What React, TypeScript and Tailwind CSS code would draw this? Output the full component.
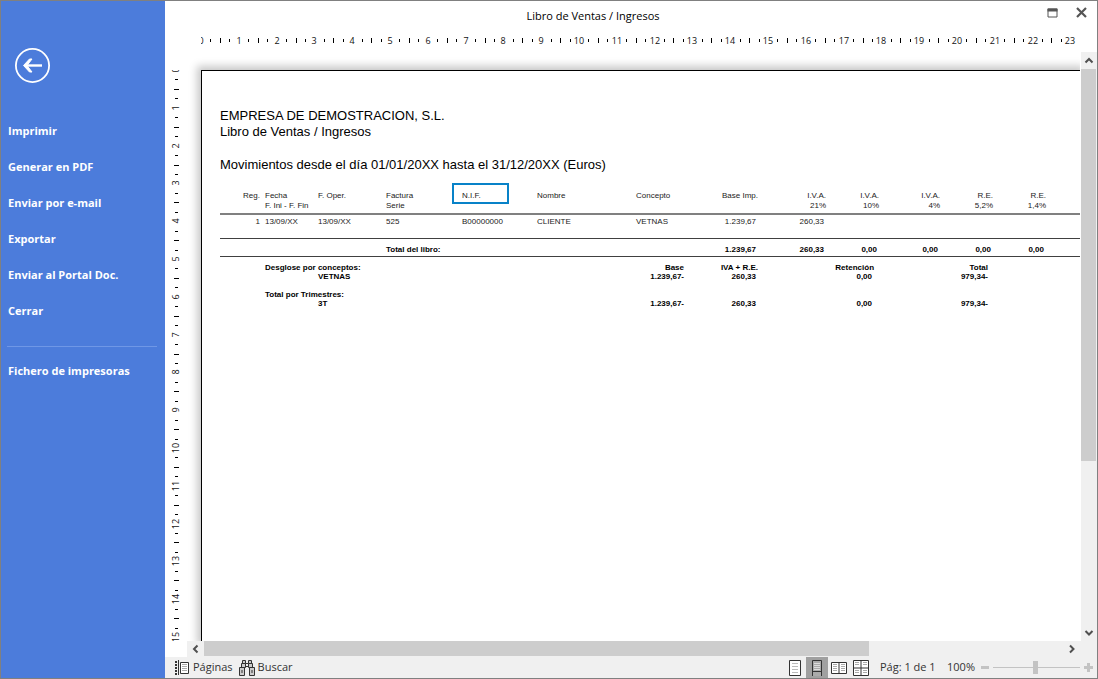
import React, { useState } from 'react';

const CM = 37.8;

const menuItems = ['Imprimir', 'Generar en PDF', 'Enviar por e-mail', 'Exportar', 'Enviar al Portal Doc.', 'Cerrar'];

const taxColumns = [
  { name: 'I.V.A.', rate: '21%', amount: '260,33', total: '260,33' },
  { name: 'I.V.A.', rate: '10%', amount: '', total: '0,00' },
  { name: 'I.V.A.', rate: '4%', amount: '', total: '0,00' },
  { name: 'R.E.', rate: '5,2%', amount: '', total: '0,00' },
  { name: 'R.E.', rate: '1,4%', amount: '', total: '0,00' },
];

// Ruler in centimetres, with a tick every quarter
function Ruler({ vertical = false, length }: { vertical?: boolean; length: number }) {
  const marks = Array.from({ length: length * 4 + 1 }, (_, i) => i);

  return (
    <svg className="block h-full w-full" aria-hidden="true">
      {marks.map((i) => {
        const pos = Math.round((i * CM) / 4);
        if (i % 4 === 0) {
          return (
            <text
              key={i}
              x={vertical ? 0 : pos}
              y={vertical ? 0 : 13}
              transform={vertical ? `translate(14 ${pos}) rotate(-90)` : undefined}
              textAnchor="middle"
              fontSize="9"
              fill="#111"
            >
              {i / 4}
            </text>
          );
        }
        const long = i % 2 === 0;
        const start = long ? 7 : 8;
        const size = long ? 5 : 3;
        return vertical ? (
          <rect key={i} x={start + 2} y={pos} width={size} height="1" fill="#000" />
        ) : (
          <rect key={i} x={pos} y={start} width="1" height={size} fill="#000" />
        );
      })}
    </svg>
  );
}

function Chevron({ direction }: { direction: 'up' | 'down' | 'left' | 'right' }) {
  const paths = {
    up: 'M1.5 6.5 L5 3 L8.5 6.5',
    down: 'M1.5 3 L5 6.5 L8.5 3',
    left: 'M6.5 1.5 L3 5 L6.5 8.5',
    right: 'M3 1.5 L6.5 5 L3 8.5',
  };
  return (
    <svg width="10" height="10" viewBox="0 0 10 10" fill="none" stroke="#505050" strokeWidth="2">
      <path d={paths[direction]} />
    </svg>
  );
}

function Sidebar() {
  return (
    <aside className="flex w-41 shrink-0 flex-col bg-[#4c7cdb] pt-[46px] text-[11px] font-bold text-white">
      <button aria-label="Volver" className="ml-[13px] h-9 w-9">
        <svg width="36" height="36" viewBox="0 0 36 36" fill="none" stroke="#fff">
          <circle cx="18.5" cy="18.5" r="16.6" strokeWidth="1.8" />
          <path d="M28 18.5H11" strokeWidth="2.4" />
          <path d="M18 12h-2.5L9.5 18.5l6 6.5H18l-5-6.5z" fill="#fff" strokeWidth="1" />
        </svg>
      </button>
      <nav className="mt-[30px] flex flex-col">
        {menuItems.map((item) => (
          <button key={item} className="h-9 pl-[7px] text-left">
            {item}
          </button>
        ))}
        <hr className="mt-[17px] mr-2 ml-1.5 border-[#6f97e6]" />
        <button className="mt-1.5 h-9 pl-[7px] text-left">Fichero de impresoras</button>
      </nav>
    </aside>
  );
}

function TitleBar() {
  return (
    <header className="flex h-[30px] shrink-0 items-center">
      <h1 className="flex-1 text-center text-[11px]">Libro de Ventas / Ingresos</h1>
      <div className="flex w-[76px] justify-end gap-4 pr-[9px] pb-2">
        <button aria-label="Maximizar">
          <svg width="13" height="13" viewBox="0 0 13 13">
            <path d="M2 3h9v8H2z" fill="none" stroke="#555" />
            <path d="M1.5 2.5h10v3h-10z" fill="#555" />
          </svg>
        </button>
        <button aria-label="Cerrar ventana">
          <svg width="13" height="13" viewBox="0 0 13 13" stroke="#555" strokeWidth="2.2">
            <path d="M2 2l9 9M11 2l-9 9" />
          </svg>
        </button>
      </div>
    </header>
  );
}

function LedgerTable() {
  return (
    <table className="mt-[17px] w-full table-fixed border-collapse text-left text-[8px] leading-[10px]">
      <colgroup>
        <col className="w-[45px]" />
        <col className="w-[53px]" />
        <col className="w-[68px]" />
        <col className="w-[66px]" />
        <col className="w-[85px]" />
        <col className="w-[99px]" />
        <col className="w-[50px]" />
        <col className="w-[72px]" />
        <col className="w-[68px]" />
        <col className="w-[53px]" />
        <col className="w-[61px]" />
        <col className="w-[53px]" />
        <col className="w-[53px]" />
        <col />
      </colgroup>
      <thead>
        <tr className="h-[24px] border-b-2 border-[#808080] align-top whitespace-nowrap text-[#222] [&>th]:pt-px [&>th]:font-normal">
          <th className="pr-[5px] text-right">Reg.</th>
          <th>Fecha<br />F. Ini - F. Fin</th>
          <th>F. Oper.</th>
          <th>Factura<br />Serie</th>
          <th className="relative pl-2.5">
            N.I.F.
            <span className="absolute -top-[7px] left-0 h-[21px] w-[57px] border-2 border-[#0882c8]" />
          </th>
          <th>Nombre</th>
          <th>Concepto</th>
          <th className="text-right">Base Imp.</th>
          {taxColumns.map((tax, i) => (
            <th key={i} className="text-right">{tax.name}<br />{tax.rate}</th>
          ))}
          <th />
        </tr>
      </thead>
      <tbody className="text-[#222]">
        <tr className="h-[24px] border-b border-[#404040] align-top [&>td]:pt-0.5">
          <td className="pr-[5px] text-right">1</td>
          <td>13/09/XX</td>
          <td>13/09/XX</td>
          <td>525</td>
          <td className="pl-2.5">B00000000</td>
          <td>CLIENTE</td>
          <td>VETNAS</td>
          <td className="pr-0.5 text-right">1.239,67</td>
          {taxColumns.map((tax, i) => (
            <td key={i} className="pr-0.5 text-right">{tax.amount}</td>
          ))}
          <td />
        </tr>
      </tbody>
      <tfoot className="font-bold text-black">
        <tr className="h-[18px] border-b border-[#404040] align-top [&>td]:pt-1.5">
          <td colSpan={3} />
          <td colSpan={4}>Total del libro:</td>
          <td className="pr-0.5 text-right">1.239,67</td>
          {taxColumns.map((tax, i) => (
            <td key={i} className="pr-0.5 text-right">{tax.total}</td>
          ))}
          <td />
        </tr>
      </tfoot>
    </table>
  );
}

function SummaryTable() {
  return (
    <table className="mt-1.5 w-full table-fixed text-right text-[8px] leading-[9px] font-bold">
      <colgroup>
        <col className="w-[45px]" />
        <col className="w-[53px]" />
        <col className="w-[266px]" />
        <col className="w-[100px]" />
        <col className="w-[74px]" />
        <col className="w-[116px]" />
        <col className="w-[114px]" />
        <col />
      </colgroup>
      <thead>
        <tr>
          <th />
          <th colSpan={2} className="text-left">Desglose por conceptos:</th>
          <th>Base</th>
          <th>IVA + R.E.</th>
          <th>Retención</th>
          <th>Total</th>
          <th />
        </tr>
      </thead>
      <tbody>
        <tr>
          <td colSpan={2} />
          <td className="text-left">VETNAS</td>
          <td>1.239,67-</td>
          <td className="pr-0.5">260,33</td>
          <td className="pr-0.5">0,00</td>
          <td>979,34-</td>
        </tr>
        <tr>
          <td />
          <th colSpan={2} className="pt-[9px] text-left">Total por Trimestres:</th>
        </tr>
        <tr>
          <td colSpan={2} />
          <td className="text-left">3T</td>
          <td>1.239,67-</td>
          <td className="pr-0.5">260,33</td>
          <td className="pr-0.5">0,00</td>
          <td>979,34-</td>
        </tr>
      </tbody>
    </table>
  );
}

function ReportPage() {
  return (
    <article className="h-full border-t border-l border-black bg-white pt-[37px] pl-[18px] font-['Liberation_Sans',Arial,sans-serif] text-black shadow-[0_0_8px_4px_rgba(0,0,0,0.22)]">
      <div className="text-[13px] leading-4">
        <h2>EMPRESA DE DEMOSTRACION, S.L.</h2>
        <p>Libro de Ventas / Ingresos</p>
        <p className="mt-[17px]">Movimientos desde el día 01/01/20XX hasta el 31/12/20XX (Euros)</p>
      </div>
      <LedgerTable />
      <SummaryTable />
    </article>
  );
}

function PageLines({ x, y, rows, width = 5 }: { x: number; y: number; rows: number; width?: number }) {
  return (
    <g stroke="#aaa">
      {Array.from({ length: rows }, (_, i) => (
        <path key={i} d={`M${x} ${y + i * 2 + 0.5}h${width}`} />
      ))}
    </g>
  );
}

function ViewIcon({ view }: { view: string }) {
  return (
    <svg width="18" height="18" viewBox="0 0 18 18" fill="none" stroke="#333">
      {view === 'Una página' && (
        <>
          <path d="M3.5 1.5h11v15h-11z" fill="#fff" />
          <path d="M6 4.5h6M6 7.5h6M6 10.5h6M6 13.5h6" stroke="#bbb" />
        </>
      )}
      {view === 'Continuo' && (
        <>
          <path d="M4.5 17V1.5h9V17M4.5 12.5h9" fill="#aaa" />
          <path d="M6 4.5h6M6 6.5h6M6 8.5h6M6 10.5h6" stroke="#ddd" />
        </>
      )}
      {view === 'Dos páginas' && (
        <>
          <path d="M1.5 3.5h15v11h-15zM9 3.5v11" fill="#fff" />
          <PageLines x={3} y={5} rows={4} width={4} />
          <PageLines x={11} y={5} rows={4} width={4} />
        </>
      )}
      {view === 'Cuatro páginas' && (
        <>
          <path d="M1.5 1.5h15v15h-15zM9 1.5v15M1 9h16" fill="#fff" />
          <PageLines x={3} y={3} rows={2} width={4} />
          <PageLines x={11} y={3} rows={2} width={4} />
          <PageLines x={3} y={11} rows={2} width={4} />
          <PageLines x={11} y={11} rows={2} width={4} />
        </>
      )}
    </svg>
  );
}

function StatusBar() {
  const [view, setView] = useState('Continuo');
  const [zoom, setZoom] = useState(100);
  const views = ['Una página', 'Continuo', 'Dos páginas', 'Cuatro páginas'];

  return (
    <footer className="flex h-[21px] shrink-0 items-center bg-[#f0f0f0] text-[11px] text-[#333]">
      <button className="ml-2.5 flex items-center gap-1">
        <svg width="14" height="15" viewBox="0 0 14 15" fill="none" stroke="#333">
          <path d="M1 1v14" strokeWidth="2" strokeDasharray="2 1" />
          <path d="M3.5 0v15" />
          <path d="M5.5 2.5h8v11h-8z" fill="#fff" />
          <path d="M7 4.5h5M7 6.5h5M7 8.5h5M7 10.5h5" stroke="#aaa" />
        </svg>
        Páginas
      </button>
      <button className="ml-1.5 flex items-center gap-[3px]">
        <svg width="16" height="16" viewBox="0 0 16 16" fill="#ccc" stroke="#333">
          <path d="M3.5 0.5h3v3h-3zM9.5 0.5h3v3h-3z" />
          <path d="M6.5 3.5h3v3h-3z" fill="#f0f0f0" />
          <path d="M2.5 3.5h4v4h-4zM9.5 3.5h4v4h-4z" />
          <path d="M0.5 7.5h5v8h-5zM10.5 7.5h5v8h-5z" />
          <path d="M3 10v3M13 10v3" />
        </svg>
        Buscar
      </button>
      <div className="ml-auto flex self-stretch">
        {views.map((v) => (
          <button
            key={v}
            aria-label={v}
            onClick={() => setView(v)}
            className={`flex w-[22px] items-center justify-center ${view === v ? 'bg-[#a0a0a0]' : ''}`}
          >
            <ViewIcon view={v} />
          </button>
        ))}
      </div>
      <span className="ml-2 w-[57px] whitespace-nowrap">Pág: 1 de 1</span>
      <span className="ml-2.5 w-[34px]">{zoom}%</span>
      <button aria-label="Reducir" onClick={() => setZoom(Math.max(0, zoom - 10))}>
        <svg width="8" height="9" viewBox="0 0 8 9"><path d="M0 3h8v3H0z" fill="#c3c3c3" /></svg>
      </button>
      <input
        type="range"
        aria-label="Zoom"
        min={0}
        max={206}
        value={zoom}
        onChange={(e) => setZoom(Number(e.target.value))}
        className="mx-1 h-[13px] w-[87px] appearance-none bg-[linear-gradient(#c3c3c3,#c3c3c3)] bg-[length:100%_1px] bg-center bg-no-repeat [&::-webkit-slider-thumb]:h-[13px] [&::-webkit-slider-thumb]:w-[5px] [&::-webkit-slider-thumb]:appearance-none [&::-webkit-slider-thumb]:bg-[#c3c3c3]"
      />
      <button aria-label="Ampliar" className="mr-1" onClick={() => setZoom(Math.min(206, zoom + 10))}>
        <svg width="9" height="9" viewBox="0 0 9 9"><path d="M3 0h3v3h3v3H6v3H3V6H0V3h3z" fill="#c3c3c3" /></svg>
      </button>
    </footer>
  );
}

export default function App() {
  return (
    <div className="flex h-screen border border-[#808080] bg-white font-['Open_Sans','Segoe_UI',sans-serif] text-black">
      <Sidebar />
      <main className="flex min-w-0 flex-1 flex-col">
        <TitleBar />
        <div className="h-[21px] shrink-0 pr-4 pl-9">
          <Ruler length={23} />
        </div>
        <div className="flex min-h-0 flex-1">
          <div className="w-[22px] shrink-0 overflow-hidden pt-[18px]">
            <Ruler vertical length={15} />
          </div>
          <div className="mr-px min-w-0 flex-1 overflow-hidden pt-[18px] pl-3.5">
            <ReportPage />
          </div>
          <div className="flex w-4 shrink-0 flex-col bg-[#f0f0f0] pr-px">
            <button aria-label="Subir" className="flex h-[17px] items-center justify-center">
              <Chevron direction="up" />
            </button>
            <div className="flex flex-1 flex-col">
              <div className="basis-[70.6%] bg-[#cdcdcd]" />
            </div>
            <button aria-label="Bajar" className="flex h-[17px] items-center justify-center">
              <Chevron direction="down" />
            </button>
          </div>
        </div>
        <div className="flex h-4 shrink-0 bg-[#f0f0f0]">
          <div className="w-[22px] bg-white" />
          <button aria-label="Izquierda" className="flex w-[17px] items-center justify-center">
            <Chevron direction="left" />
          </button>
          <div className="flex flex-1 pb-px">
            <div className="basis-[77.4%] bg-[#cdcdcd]" />
          </div>
          <button aria-label="Derecha" className="mr-[17px] flex w-[17px] items-center justify-center">
            <Chevron direction="right" />
          </button>
        </div>
        <StatusBar />
      </main>
    </div>
  );
}
